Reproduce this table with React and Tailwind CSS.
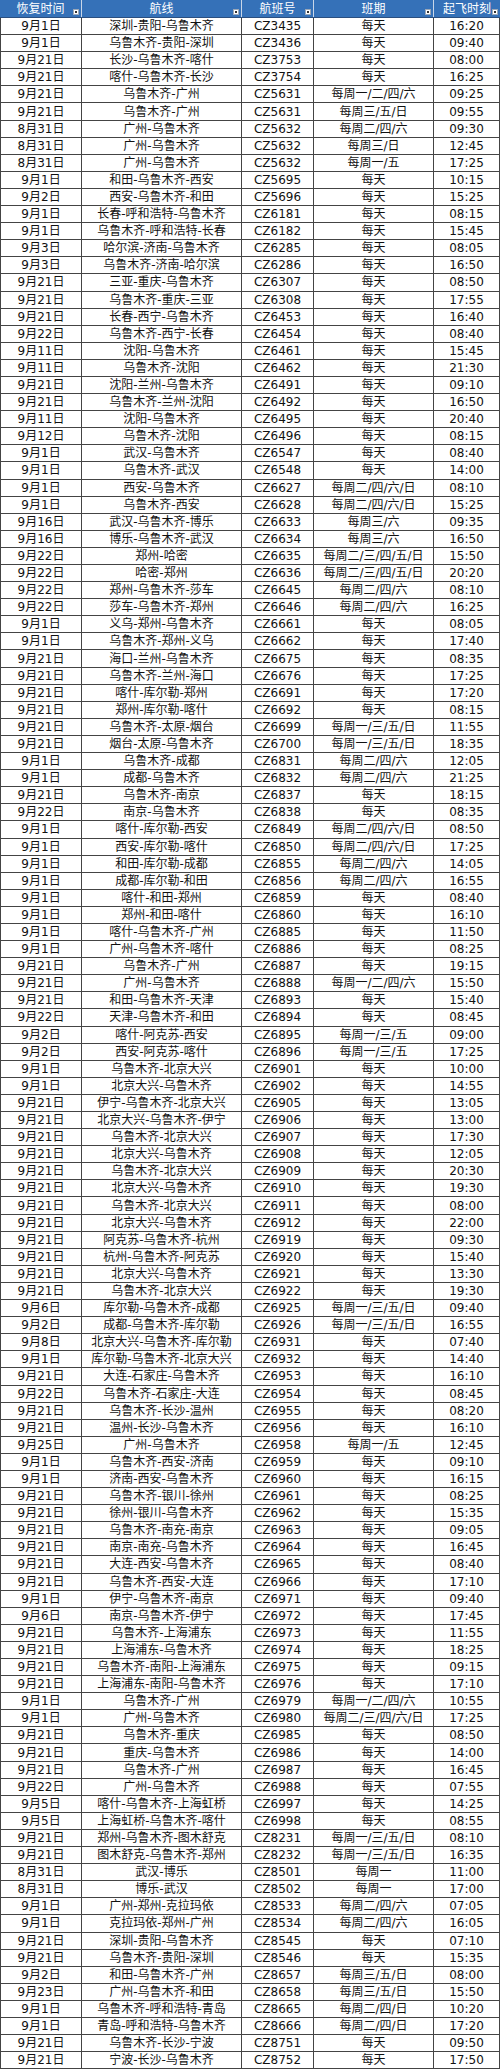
import React from 'react';

// 恢复时间 | 航线 | 航班号 | 班期 | 起飞时刻
const raw = `9月1日|深圳-贵阳-乌鲁木齐|CZ3435|每天|16:20
9月1日|乌鲁木齐-贵阳-深圳|CZ3436|每天|09:40
9月21日|长沙-乌鲁木齐-喀什|CZ3753|每天|08:00
9月21日|喀什-乌鲁木齐-长沙|CZ3754|每天|16:25
9月21日|乌鲁木齐-广州|CZ5631|每周一/二/四/六|09:25
9月21日|乌鲁木齐-广州|CZ5631|每周三/五/日|09:55
8月31日|广州-乌鲁木齐|CZ5632|每周二/四/六|09:30
8月31日|广州-乌鲁木齐|CZ5632|每周三/日|12:45
8月31日|广州-乌鲁木齐|CZ5632|每周一/五|17:25
9月1日|和田-乌鲁木齐-西安|CZ5695|每天|10:15
9月2日|西安-乌鲁木齐-和田|CZ5696|每天|15:25
9月1日|长春-呼和浩特-乌鲁木齐|CZ6181|每天|08:15
9月1日|乌鲁木齐-呼和浩特-长春|CZ6182|每天|15:45
9月3日|哈尔滨-济南-乌鲁木齐|CZ6285|每天|08:05
9月3日|乌鲁木齐-济南-哈尔滨|CZ6286|每天|16:50
9月21日|三亚-重庆-乌鲁木齐|CZ6307|每天|08:50
9月21日|乌鲁木齐-重庆-三亚|CZ6308|每天|17:55
9月21日|长春-西宁-乌鲁木齐|CZ6453|每天|16:40
9月22日|乌鲁木齐-西宁-长春|CZ6454|每天|08:40
9月11日|沈阳-乌鲁木齐|CZ6461|每天|15:45
9月11日|乌鲁木齐-沈阳|CZ6462|每天|21:30
9月21日|沈阳-兰州-乌鲁木齐|CZ6491|每天|09:10
9月21日|乌鲁木齐-兰州-沈阳|CZ6492|每天|16:50
9月11日|沈阳-乌鲁木齐|CZ6495|每天|20:40
9月12日|乌鲁木齐-沈阳|CZ6496|每天|08:15
9月1日|武汉-乌鲁木齐|CZ6547|每天|08:40
9月1日|乌鲁木齐-武汉|CZ6548|每天|14:00
9月1日|西安-乌鲁木齐|CZ6627|每周二/四/六/日|08:10
9月1日|乌鲁木齐-西安|CZ6628|每周二/四/六/日|15:25
9月16日|武汉-乌鲁木齐-博乐|CZ6633|每周三/六|09:35
9月16日|博乐-乌鲁木齐-武汉|CZ6634|每周三/六|16:50
9月22日|郑州-哈密|CZ6635|每周二/三/四/五/日|15:50
9月22日|哈密-郑州|CZ6636|每周二/三/四/五/日|20:20
9月22日|郑州-乌鲁木齐-莎车|CZ6645|每周二/四/六|08:10
9月22日|莎车-乌鲁木齐-郑州|CZ6646|每周二/四/六|16:25
9月1日|义乌-郑州-乌鲁木齐|CZ6661|每天|08:05
9月1日|乌鲁木齐-郑州-义乌|CZ6662|每天|17:40
9月21日|海口-兰州-乌鲁木齐|CZ6675|每天|08:35
9月21日|乌鲁木齐-兰州-海口|CZ6676|每天|17:25
9月21日|喀什-库尔勒-郑州|CZ6691|每天|17:20
9月21日|郑州-库尔勒-喀什|CZ6692|每天|08:15
9月21日|乌鲁木齐-太原-烟台|CZ6699|每周一/三/五/日|11:55
9月21日|烟台-太原-乌鲁木齐|CZ6700|每周一/三/五/日|18:35
9月1日|乌鲁木齐-成都|CZ6831|每周二/四/六|12:05
9月1日|成都-乌鲁木齐|CZ6832|每周二/四/六|21:25
9月21日|乌鲁木齐-南京|CZ6837|每天|18:15
9月22日|南京-乌鲁木齐|CZ6838|每天|08:35
9月1日|喀什-库尔勒-西安|CZ6849|每周二/四/六/日|08:50
9月1日|西安-库尔勒-喀什|CZ6850|每周二/四/六/日|17:25
9月1日|和田-库尔勒-成都|CZ6855|每周二/四/六|14:05
9月1日|成都-库尔勒-和田|CZ6856|每周二/四/六|16:55
9月1日|喀什-和田-郑州|CZ6859|每天|08:40
9月1日|郑州-和田-喀什|CZ6860|每天|16:10
9月1日|喀什-乌鲁木齐-广州|CZ6885|每天|11:50
9月1日|广州-乌鲁木齐-喀什|CZ6886|每天|08:25
9月21日|乌鲁木齐-广州|CZ6887|每天|19:15
9月21日|广州-乌鲁木齐|CZ6888|每周一/二/四/六|15:50
9月21日|和田-乌鲁木齐-天津|CZ6893|每天|15:40
9月22日|天津-乌鲁木齐-和田|CZ6894|每天|08:45
9月2日|喀什-阿克苏-西安|CZ6895|每周一/三/五|09:00
9月2日|西安-阿克苏-喀什|CZ6896|每周一/三/五|17:25
9月1日|乌鲁木齐-北京大兴|CZ6901|每天|10:00
9月1日|北京大兴-乌鲁木齐|CZ6902|每天|14:55
9月21日|伊宁-乌鲁木齐-北京大兴|CZ6905|每天|13:05
9月21日|北京大兴-乌鲁木齐-伊宁|CZ6906|每天|13:00
9月21日|乌鲁木齐-北京大兴|CZ6907|每天|17:30
9月21日|北京大兴-乌鲁木齐|CZ6908|每天|12:05
9月21日|乌鲁木齐-北京大兴|CZ6909|每天|20:30
9月21日|北京大兴-乌鲁木齐|CZ6910|每天|19:30
9月21日|乌鲁木齐-北京大兴|CZ6911|每天|08:00
9月21日|北京大兴-乌鲁木齐|CZ6912|每天|22:00
9月21日|阿克苏-乌鲁木齐-杭州|CZ6919|每天|09:30
9月21日|杭州-乌鲁木齐-阿克苏|CZ6920|每天|15:40
9月21日|北京大兴-乌鲁木齐|CZ6921|每天|13:30
9月21日|乌鲁木齐-北京大兴|CZ6922|每天|19:30
9月6日|库尔勒-乌鲁木齐-成都|CZ6925|每周一/三/五/日|09:40
9月2日|成都-乌鲁木齐-库尔勒|CZ6926|每周一/三/五/日|16:55
9月8日|北京大兴-乌鲁木齐-库尔勒|CZ6931|每天|07:40
9月1日|库尔勒-乌鲁木齐-北京大兴|CZ6932|每天|14:40
9月21日|大连-石家庄-乌鲁木齐|CZ6953|每天|16:10
9月22日|乌鲁木齐-石家庄-大连|CZ6954|每天|08:45
9月21日|乌鲁木齐-长沙-温州|CZ6955|每天|08:20
9月21日|温州-长沙-乌鲁木齐|CZ6956|每天|16:10
9月25日|广州-乌鲁木齐|CZ6958|每周一/五|12:45
9月1日|乌鲁木齐-西安-济南|CZ6959|每天|09:10
9月1日|济南-西安-乌鲁木齐|CZ6960|每天|16:15
9月21日|乌鲁木齐-银川-徐州|CZ6961|每天|08:25
9月21日|徐州-银川-乌鲁木齐|CZ6962|每天|15:35
9月21日|乌鲁木齐-南充-南京|CZ6963|每天|09:05
9月21日|南京-南充-乌鲁木齐|CZ6964|每天|16:45
9月21日|大连-西安-乌鲁木齐|CZ6965|每天|08:40
9月21日|乌鲁木齐-西安-大连|CZ6966|每天|17:10
9月1日|伊宁-乌鲁木齐-南京|CZ6971|每天|09:40
9月6日|南京-乌鲁木齐-伊宁|CZ6972|每天|17:45
9月21日|乌鲁木齐-上海浦东|CZ6973|每天|11:55
9月21日|上海浦东-乌鲁木齐|CZ6974|每天|18:25
9月21日|乌鲁木齐-南阳-上海浦东|CZ6975|每天|09:15
9月21日|上海浦东-南阳-乌鲁木齐|CZ6976|每天|17:10
9月1日|乌鲁木齐-广州|CZ6979|每周一/二/四/六|10:55
9月1日|广州-乌鲁木齐|CZ6980|每周二/三/四/六/日|17:25
9月21日|乌鲁木齐-重庆|CZ6985|每天|08:50
9月21日|重庆-乌鲁木齐|CZ6986|每天|14:00
9月21日|乌鲁木齐-广州|CZ6987|每天|16:45
9月22日|广州-乌鲁木齐|CZ6988|每天|07:55
9月5日|喀什-乌鲁木齐-上海虹桥|CZ6997|每天|14:25
9月5日|上海虹桥-乌鲁木齐-喀什|CZ6998|每天|08:55
9月21日|郑州-乌鲁木齐-图木舒克|CZ8231|每周一/三/五/日|08:10
9月21日|图木舒克-乌鲁木齐-郑州|CZ8232|每周一/三/五/日|16:35
8月31日|武汉-博乐|CZ8501|每周一|11:00
8月31日|博乐-武汉|CZ8502|每周一|17:00
9月1日|广州-郑州-克拉玛依|CZ8533|每周二/四/六|07:05
9月1日|克拉玛依-郑州-广州|CZ8534|每周二/四/六|16:05
9月21日|深圳-贵阳-乌鲁木齐|CZ8545|每天|07:10
9月21日|乌鲁木齐-贵阳-深圳|CZ8546|每天|15:35
9月2日|和田-乌鲁木齐-广州|CZ8657|每周三/五/日|08:00
9月23日|广州-乌鲁木齐-和田|CZ8658|每周三/五/日|15:50
9月1日|乌鲁木齐-呼和浩特-青岛|CZ8665|每周二/四/日|10:20
9月1日|青岛-呼和浩特-乌鲁木齐|CZ8666|每周二/四/日|17:20
9月21日|乌鲁木齐-长沙-宁波|CZ8751|每天|09:50
9月21日|宁波-长沙-乌鲁木齐|CZ8752|每天|17:50`;

const rows = raw.split('\n').map((line) => line.split('|'));

const headers = ['恢复时间', '航线', '航班号', '班期', '起飞时刻'];

// the little autofilter button in the corner of each header cell
const FilterMark = () => (
  <span className="absolute right-[2px] bottom-[2px] w-[6px] h-[6px] bg-white border border-[#9aa7b8] flex items-end justify-center">
    <span className="w-[2px] h-[2px] bg-[#333] mb-[1px]"></span>
  </span>
);

const App = () => {
  return (
    <div className="w-[500px] bg-white font-['DejaVu_Sans','Noto_Sans_CJK_SC',sans-serif] text-[#111]">
      <div className="grid grid-cols-[82px_160px_72px_120px_66px] h-[18px] bg-[#3571b8] border-b border-[#2a4f80]">
        {headers.map((h, i) => (
          <div
            key={i}
            className={`relative flex items-center justify-center text-white text-[12px] leading-none ${i < 4 ? 'border-r border-[#c9d6e8]' : ''}`}
          >
            {h}
            <FilterMark />
          </div>
        ))}
      </div>

      <div className="border-l border-[#444]">
        {rows.map((r, idx) => (
          <div key={idx} className="grid grid-cols-[81px_160px_72px_120px_66px] h-[17.1px] border-b border-[#444]">
            {r.map((cell, j) => (
              <div
                key={j}
                className="flex items-center justify-center text-[12px] leading-none border-r border-[#444] whitespace-nowrap overflow-hidden"
              >
                {cell}
              </div>
            ))}
          </div>
        ))}
      </div>
    </div>
  );
};

export default App;
